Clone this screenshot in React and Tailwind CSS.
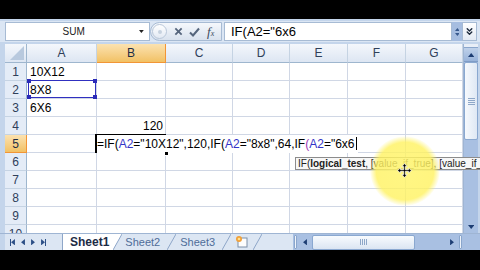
import { ChevronsDown } from "lucide-react";

const GRID = "grid grid-cols-[22px_70px_69px_67px_57px_58px_58px_57px]";
const COLS = ["A", "B", "C", "D", "E", "F", "G"];
const ROWS = [1, 2, 3, 4, 5, 6, 7, 8, 9, 10];

function Tri({ dir = "down", size = 5, color = "#1f3a66" }) {
  const pts = {
    down: "0,0 10,0 5,6",
    up: "0,6 10,6 5,0",
    left: "6,0 6,10 0,5",
    right: "0,0 0,10 6,5",
  }[dir];
  const vb = dir === "up" || dir === "down" ? "0 0 10 6" : "0 0 6 10";
  const w = dir === "up" || dir === "down" ? size * 1.6 : size;
  const h = dir === "up" || dir === "down" ? size : size * 1.6;
  return (
    <svg width={w} height={h} viewBox={vb}>
      <polygon points={pts} fill={color} />
    </svg>
  );
}

function ColHead({ label, active }) {
  return (
    <div
      className={
        active
          ? "flex h-[19px] items-center justify-center border-r border-b border-r-[#f29536] border-b-[#f29536] bg-gradient-to-b from-[#fbe2b0] to-[#f2c163] text-[12px] text-[#1e2d44]"
          : "flex h-[19px] items-center justify-center border-r border-b border-r-[#c5d3e3] border-b-[#9eb6ce] bg-gradient-to-b from-[#f4f7fc] to-[#dde6f3] text-[12px] text-[#2f405a]"
      }
    >
      {label}
    </div>
  );
}

function RowHead({ n, active }) {
  return (
    <div
      className={
        active
          ? "flex h-[18px] items-center justify-center border-r border-b border-r-[#f29536] border-b-[#f29536] bg-gradient-to-b from-[#fbe2b0] to-[#f2c163] text-[12px] text-[#1e2d44]"
          : "flex h-[18px] items-center justify-center border-r border-b border-r-[#9eb6ce] border-b-[#c5d3e3] bg-[#e4ecf7] text-[12px] text-[#2f405a]"
      }
    >
      {n}
    </div>
  );
}

function Handle({ className }) {
  return <span className={`absolute h-[4px] w-[4px] bg-[#2b2bb8] ${className}`} />;
}

function Cell({ row, col }) {
  const base = "relative flex h-[18px] items-center border-r border-b border-[#d0d7e5] bg-white text-[12px] text-black";

  if (col === "A" && row <= 3) {
    const text = { 1: "10X12", 2: "8X8", 3: "6X6" }[row];
    return (
      <div className={`${base} pl-[3px]`}>
        {text}
        {row === 2 && (
          <span className="absolute left-[1px] top-[-1px] right-[0px] bottom-[0px] border border-[#3030c0]">
            <Handle className="left-[-2px] top-[-2px]" />
            <Handle className="right-[-2px] top-[-2px]" />
            <Handle className="left-[-2px] bottom-[-2px]" />
            <Handle className="right-[-2px] bottom-[-2px]" />
          </span>
        )}
      </div>
    );
  }

  if (col === "B" && row === 4) {
    return <div className={`${base} justify-end pr-[2px]`}>120</div>;
  }

  if (col === "B" && row === 5) {
    return (
      <div className={`${base} z-10 overflow-visible`}>
        <span className="absolute left-[-2px] top-[-1px] h-[19px] w-[71px] border-2 border-black" />
        <span className="relative z-10 whitespace-nowrap bg-white pr-[1px]">
          =IF(<span className="text-[#3434c8]">A2</span>="10X12",120,IF(
          <span className="text-[#3434c8]">A2</span>="8x8",64,IF
          <span className="text-[#a03ab8]">(</span>
          <span className="text-[#3434c8]">A2</span>="6x6
          <span className="ml-[1px] inline-block h-[13px] w-[1px] translate-y-[2px] bg-black" />
        </span>
        <span className="absolute right-[-4px] bottom-[-4px] z-20 h-[5px] w-[5px] border border-white bg-black" />
      </div>
    );
  }

  return <div className={base} />;
}

function VScroll() {
  return (
    <div className="flex w-[15px] flex-col border-l border-[#9fb5d3] bg-[#a9c0e2]">
      <div className="h-[4px] border-b border-[#8aa6cc] bg-[#e8eef7]" />
      <div className="flex h-[14px] items-center justify-center border-b border-[#7f9cc6] bg-gradient-to-b from-[#bfd1ea] to-[#98b3da]">
        <Tri dir="up" size={4} color="#1d3d73" />
      </div>
      <div className="flex h-[78px] items-center justify-center rounded-[2px] border border-[#8aa8d0] bg-gradient-to-r from-[#f6f9fd] to-[#dfe8f4]">
        <div className="flex flex-col gap-[1px]">
          <span className="h-[1px] w-[7px] bg-[#8ea7c8]" />
          <span className="h-[1px] w-[7px] bg-[#8ea7c8]" />
          <span className="h-[1px] w-[7px] bg-[#8ea7c8]" />
          <span className="h-[1px] w-[7px] bg-[#8ea7c8]" />
        </div>
      </div>
      <div className="flex-1" />
      <div className="flex h-[13px] items-center justify-center">
        <Tri dir="down" size={4} color="#1d3d73" />
      </div>
    </div>
  );
}

function Slant({ fill }) {
  return (
    <svg width="9" height="16" viewBox="0 0 9 16" className="shrink-0">
      {fill && <polygon points="0,0 9,0 0,16" fill={fill} />}
      <line x1="0" y1="16" x2="9" y2="0" stroke="#8ea6c8" strokeWidth="1" />
    </svg>
  );
}

function TabBar() {
  return (
    <div className="flex h-[17px] border-t border-[#9fb5d3] bg-[#dce6f3]">
      <div className="w-[5px] bg-[#c4d5eb]" />
      <div className="flex w-[57px] items-center gap-[6px] pl-[5px]">
        <span className="flex items-center">
          <span className="h-[7px] w-[1px] bg-[#2c4f86]" />
          <Tri dir="left" size={4} color="#2c4f86" />
        </span>
        <Tri dir="left" size={4} color="#2c4f86" />
        <Tri dir="right" size={4} color="#2c4f86" />
        <span className="flex items-center">
          <Tri dir="right" size={4} color="#2c4f86" />
          <span className="h-[7px] w-[1px] bg-[#2c4f86]" />
        </span>
      </div>
      <div className="flex items-start">
        <div className="flex h-[16px] items-center border-l border-[#8ea6c8] bg-white pl-[7px] pr-[4px] text-[12px] font-bold text-[#1c2b44]">
          Sheet1
        </div>
        <Slant fill="#ffffff" />
        <div className="flex h-[16px] items-center pl-[3px] pr-[7px] text-[11px] text-[#4f6d99]">Sheet2</div>
        <Slant />
        <div className="flex h-[16px] items-center pl-[4px] pr-[7px] text-[11px] text-[#4f6d99]">Sheet3</div>
        <Slant />
        <div className="flex h-[16px] items-center pl-[4px] pr-[4px]">
          <svg width="14" height="12" viewBox="0 0 14 12">
            <rect x="3" y="2" width="9" height="9" fill="#fdfdfd" stroke="#7d8fa8" />
            <circle cx="4" cy="3" r="3" fill="#f0a03a" />
            <circle cx="4" cy="3" r="1.3" fill="#ffe08a" />
          </svg>
        </div>
        <Slant />
      </div>
      <div className="w-[31px]" />
      <div className="flex flex-1 items-center bg-[#a9c0e2]">
        <div className="mx-[1px] h-[14px] w-[3px] rounded-[1px] border border-[#8aa6cc] bg-[#eef3fa]" />
        <div className="flex w-[14px] items-center justify-center">
          <Tri dir="left" size={4} color="#1d3d73" />
        </div>
        <div className="flex h-[15px] w-[103px] items-center justify-center rounded-[2px] border border-[#8aa8d0] bg-gradient-to-b from-[#f8fbfe] to-[#dbe5f2]">
          <div className="flex gap-[1px]">
            <span className="h-[6px] w-[1px] bg-[#8ea7c8]" />
            <span className="h-[6px] w-[1px] bg-[#8ea7c8]" />
            <span className="h-[6px] w-[1px] bg-[#8ea7c8]" />
            <span className="h-[6px] w-[1px] bg-[#8ea7c8]" />
          </div>
        </div>
        <div className="flex-1" />
        <div className="flex w-[12px] items-center justify-center">
          <Tri dir="right" size={4} color="#1d3d73" />
        </div>
        <div className="mx-[1px] h-[14px] w-[3px] rounded-[1px] border border-[#8aa6cc] bg-[#eef3fa]" />
        <div className="w-[17px]" />
      </div>
    </div>
  );
}

function FormulaBar() {
  return (
    <div className="flex h-[21px] items-center bg-[#dbe6f4]">
      <div className="w-[5px]" />
      <div className="flex h-[19px] w-[145px] items-center border border-[#a7bbd4] bg-white">
        <span className="flex-1 pl-[2px] text-center text-[10px] text-[#1b1b1b]">SUM</span>
        <span className="mr-[5px] flex items-center">
          <Tri dir="down" size={3} color="#222" />
        </span>
      </div>
      <div className="flex h-[19px] w-[72px] items-center rounded-l-full border border-[#a7bbd4] bg-gradient-to-b from-[#f5f8fc] to-[#d9e2ee]">
        <span className="ml-[1px] flex h-[15px] w-[15px] items-center justify-center rounded-full border border-[#b9c7d9] bg-gradient-to-b from-white to-[#e2e9f3]">
          <span className="h-[4px] w-[4px] rounded-full bg-[#c7d2e0]" />
        </span>
        <svg width="9" height="9" viewBox="0 0 10 10" className="ml-[7px]">
          <path d="M1.5 1.5 L8.5 8.5 M8.5 1.5 L1.5 8.5" stroke="#55657c" strokeWidth="2" />
        </svg>
        <svg width="11" height="10" viewBox="0 0 11 10" className="ml-[6px]">
          <path d="M1 5.5 L4 8.5 L10 1.5" stroke="#55657c" strokeWidth="2" fill="none" />
        </svg>
        <span className="ml-[7px] font-['Liberation_Serif',serif] text-[13px] italic leading-none text-[#3c4a5e]">
          f<span className="text-[8px]">x</span>
        </span>
      </div>
      <div className="w-[2px]" />
      <div className="flex h-[19px] flex-1 items-center border border-[#a7bbd4] bg-white pl-[6px] text-[13px] text-black">
        IF(A2="6x6
      </div>
      <div className="flex h-[19px] w-[10px] flex-col items-center justify-center gap-[2px] bg-[#a6bde0]">
        <Tri dir="up" size={3} color="#38598e" />
        <Tri dir="down" size={3} color="#38598e" />
      </div>
      <div className="flex h-[19px] w-[15px] items-center justify-center border border-[#a7bbd4] bg-gradient-to-b from-white to-[#e3eaf4]">
        <ChevronsDown size={11} strokeWidth={3} color="#1d2a3d" />
      </div>
      <div className="w-[3px]" />
    </div>
  );
}

export default function App() {
  return (
    <div className="relative h-[270px] w-[480px] overflow-hidden bg-black font-['Liberation_Sans',Arial,sans-serif]">
      <div className="h-[19px]" />
      <div className="flex flex-col bg-[#c4d5eb]">
        <div className="h-[2px] bg-[#c4d5eb]" />
        <FormulaBar />
        <div className="h-[2px] bg-[#c4d5eb]" />
        <div className="flex h-[189px]">
          <div className="w-[5px] bg-[#c4d5eb]" />
          <div className={`${GRID} h-[189px] w-[458px] content-start overflow-hidden bg-white`}>
            <div className="relative h-[19px] border-r border-b border-[#9eb6ce] bg-gradient-to-b from-[#f4f7fc] to-[#dde6f3]">
              <svg width="14" height="14" viewBox="0 0 14 14" className="absolute right-[2px] bottom-[2px]">
                <polygon points="14,0 14,14 0,14" fill="#b8c9de" />
              </svg>
            </div>
            {COLS.map((c) => (
              <ColHead key={c} label={c} active={c === "B"} />
            ))}
            {ROWS.map((r) => [
              <RowHead key={`h${r}`} n={r} active={r === 5} />,
              ...COLS.map((c) => <Cell key={`${c}${r}`} row={r} col={c} />),
            ])}
          </div>
          <VScroll />
          <div className="w-[2px] bg-[#c4d5eb]" />
        </div>
        <TabBar />
      </div>

      {/* function tooltip */}
      <div className="absolute left-[295px] top-[157px] z-30 flex h-[13px] w-[200px] items-center whitespace-nowrap border border-[#8c8c8c] bg-[#f7f7f7] pl-[2px] text-[10px] leading-none text-[#222]">
        IF(<b>logical_test</b>, [value_if_true], [value_if_false])
      </div>

      {/* presenter cursor highlight */}
      <div className="absolute left-[370px] top-[136px] z-40 h-[70px] w-[70px] rounded-full bg-[radial-gradient(circle,rgba(255,245,110,0.85)_0%,rgba(255,242,95,0.8)_58%,rgba(255,242,100,0)_71%)]" />
      <svg width="15" height="15" viewBox="0 0 15 15" className="absolute left-[397px] top-[163px] z-50">
        <path
          d="M7.5 0.5 L10 3.5 H8.3 V6.7 H11.5 V5 L14.5 7.5 L11.5 10 V8.3 H8.3 V11.5 H10 L7.5 14.5 L5 11.5 H6.7 V8.3 H3.5 V10 L0.5 7.5 L3.5 5 V6.7 H6.7 V3.5 H5 Z"
          fill="#000"
          stroke="#fff"
          strokeWidth="0.7"
        />
      </svg>
    </div>
  );
}
